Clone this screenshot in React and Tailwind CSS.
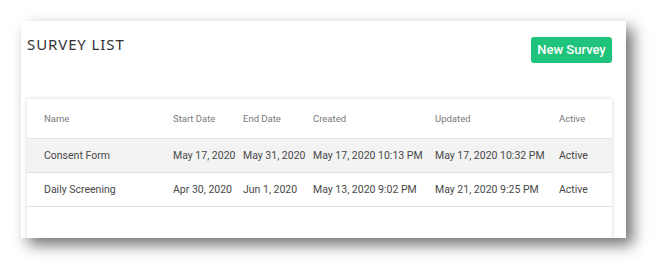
const surveys = [
  {
    name: "Consent Form",
    start: "May 17, 2020",
    end: "May 31, 2020",
    created: "May 17, 2020 10:13 PM",
    updated: "May 17, 2020 10:32 PM",
    active: "Active",
  },
  {
    name: "Daily Screening",
    start: "Apr 30, 2020",
    end: "Jun 1, 2020",
    created: "May 13, 2020 9:02 PM",
    updated: "May 21, 2020 9:25 PM",
    active: "Active",
  },
];

const cols = "grid grid-cols-[129px_70px_70px_122px_124px_1fr] pl-[17px] items-center";

function SurveyTable() {
  return (
    <div className="mt-[36px] h-[200px] bg-white shadow-[0_0_4px_rgba(0,0,0,0.18)] font-['Roboto',sans-serif]">
      <div className={`${cols} h-[40px] border-b border-[#e2e2e2] pt-[2px] text-[9.5px] text-[#7a7a7a]`}>
        <span>Name</span>
        <span>Start Date</span>
        <span>End Date</span>
        <span>Created</span>
        <span>Updated</span>
        <span>Active</span>
      </div>
      {surveys.map((s, i) => (
        <div
          key={s.name}
          className={`${cols} h-[34px] border-b border-[#e2e2e2] pt-[1px] text-[10.5px] text-[#484848] ${
            i === 0 ? "bg-[#f3f3f3]" : "bg-white"
          }`}
        >
          <span>{s.name}</span>
          <span>{s.start}</span>
          <span>{s.end}</span>
          <span>{s.created}</span>
          <span>{s.updated}</span>
          <span>{s.active}</span>
        </div>
      ))}
    </div>
  );
}

export default function App() {
  return (
    <div className="w-[668px] h-[280px] bg-white pl-[21px] pt-[21px]">
      <div className="w-[605px] h-[217px] overflow-hidden bg-white pl-[6px] pr-[14px] shadow-[7px_7px_14px_rgba(0,0,0,0.55)]">
        <div className="mt-[16px] flex items-start justify-between">
          <h1 className="mt-[-3px] font-['Noto_Sans',sans-serif] text-[15px] leading-[20px] tracking-[0.06em] text-[#333]">
            SURVEY LIST
          </h1>
          <button className="h-[26px] w-[81px] rounded-[3px] bg-[#1fc37b] font-['Roboto',sans-serif] text-[13px] font-medium text-white">
            New Survey
          </button>
        </div>
        <SurveyTable />
      </div>
    </div>
  );
}
